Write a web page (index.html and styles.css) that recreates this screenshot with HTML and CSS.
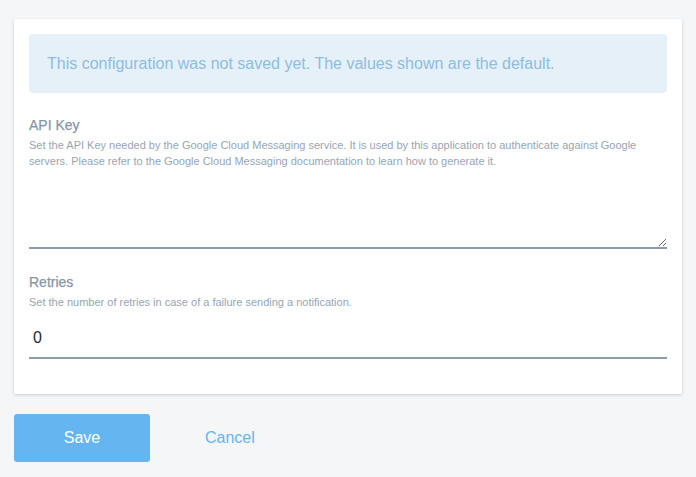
FILE: index.html
```html
<!DOCTYPE html>
<html>
<head>
<meta charset="utf-8">
<link rel="stylesheet" href="styles.css">
</head>
<body>
<div class="card">
  <div class="alert">This configuration was not saved yet. The values shown are the default.</div>
  <div class="field">
    <label class="label">API Key</label>
    <p class="desc">Set the API Key needed by the Google Cloud Messaging service. It is used by this application to authenticate against Google servers. Please refer to the Google Cloud Messaging documentation to learn how to generate it.</p>
    <textarea class="textarea"></textarea>
  </div>
  <div class="field">
    <label class="label">Retries</label>
    <p class="desc">Set the number of retries in case of a failure sending a notification.</p>
    <input class="input" type="text" value="0">
  </div>
</div>
<div class="actions">
  <button class="btn-save">Save</button>
  <button class="btn-cancel">Cancel</button>
</div>
</body>
</html>
```
FILE: styles.css
```css
html, body {
  margin: 0;
  padding: 0;
  background: #f5f6f8;
  font-family: "Liberation Sans", Arial, sans-serif;
}
.card {
  margin: 19px 14px 0 14px;
  background: #ffffff;
  padding: 15px 15px 35px 15px;
  box-shadow: 0 1px 3px rgba(0,0,0,0.18);
}
.alert {
  height: 59px;
  line-height: 59px;
  background: #e5f0f9;
  border-radius: 4px;
  color: #8dbde0;
  font-size: 16px;
  padding: 0 18px;
}
.field {
  display: flex;
  flex-direction: column;
}
.label {
  margin-top: 22px;
  font-size: 14px;
  line-height: 20px;
  color: #8696a7;
  -webkit-text-stroke: 0.25px #8696a7;
}
.field + .field .label {
  margin-top: 23px;
}
.desc {
  margin: 2px 0 0 0;
  font-size: 11px;
  line-height: 16px;
  color: #97a5b3;
}
.textarea {
  margin-top: 6px;
  height: 74px;
  box-sizing: border-box;
  border: none;
  border-bottom: 2px solid #8a9daf;
  outline: none;
  resize: vertical;
  font-family: inherit;
  font-size: 16px;
  padding: 4px;
}
.input {
  margin-top: 9px;
  height: 40px;
  box-sizing: border-box;
  border: none;
  border-bottom: 2px solid #8a9daf;
  outline: none;
  font-family: inherit;
  font-size: 16px;
  color: #222a33;
  padding: 0 4px;
}
.actions {
  display: flex;
  align-items: center;
  margin: 20px 14px 0 14px;
}
.btn-save {
  width: 136px;
  height: 48px;
  border: none;
  border-radius: 3px;
  background: #65b5f1;
  color: #ffffff;
  font-family: inherit;
  font-size: 16px;
  cursor: pointer;
}
.btn-cancel {
  margin-left: 55px;
  border: none;
  background: none;
  padding: 0;
  color: #65b5f1;
  font-family: inherit;
  font-size: 16px;
  cursor: pointer;
}
```
